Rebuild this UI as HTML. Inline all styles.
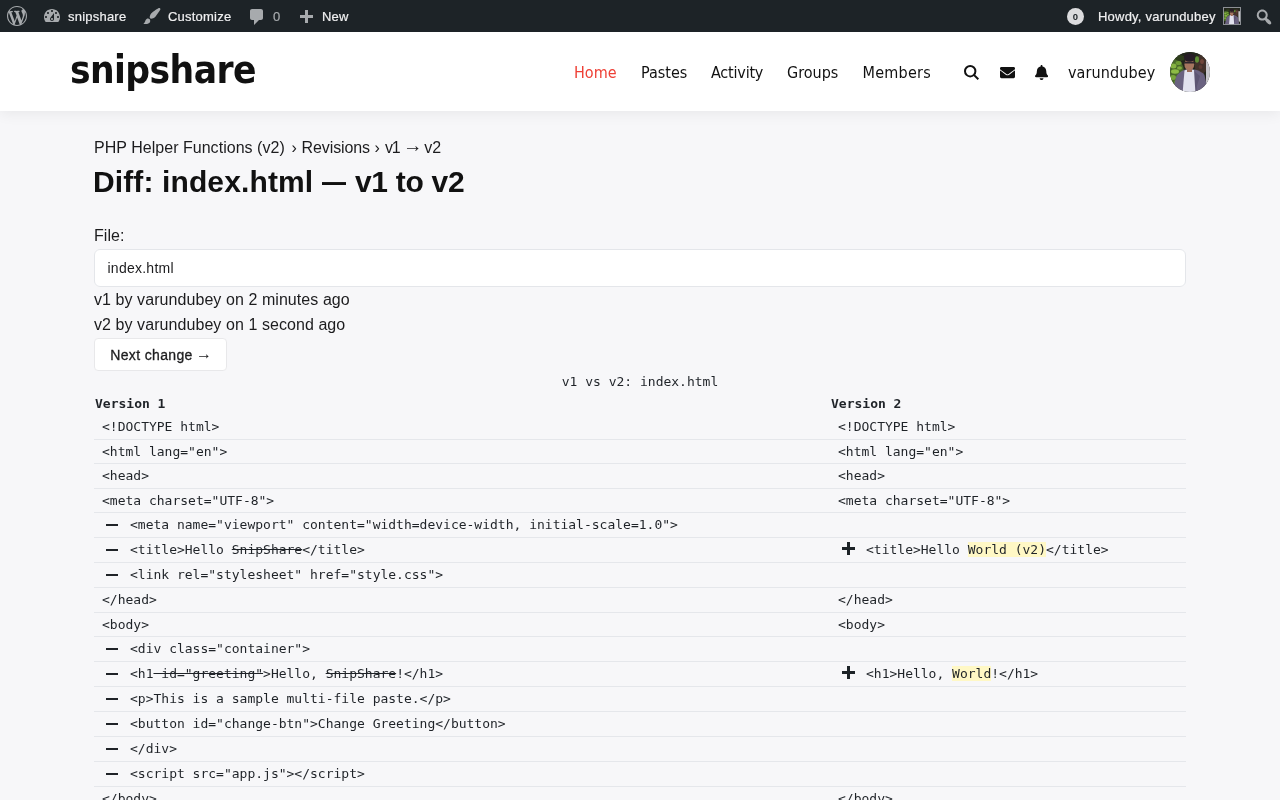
<!DOCTYPE html>
<html lang="en">
<head>
<meta charset="UTF-8">
<title>Diff: index.html — v1 to v2 – snipshare</title>
<style>
*{box-sizing:border-box;margin:0;padding:0}
html,body{width:1280px;height:800px;overflow:hidden}
body{background:#f7f7f9;font-family:"Liberation Sans",sans-serif;color:#1c1c1e;position:relative}
a{color:inherit;text-decoration:none}
/* admin bar */
.bar-bg{position:absolute;left:0;top:0;width:1280px;height:32px;background:#1d2327}
#wpadminbar{position:absolute;left:0;top:0;width:1280px;height:32px;color:#f0f0f1;font-size:13px;line-height:32px;will-change:transform}
#wpadminbar .ab{position:absolute;top:1px;height:32px;white-space:nowrap;letter-spacing:.22px;-webkit-text-stroke:.2px currentColor}
#wpadminbar svg{position:absolute;fill:#a7aaad}
/* header */
.head-bg{position:absolute;left:0;top:32px;width:1280px;height:79px;background:#fff;box-shadow:0 2px 14px rgba(0,0,0,.07)}
#masthead{position:absolute;left:0;top:32px;width:1280px;height:79px;will-change:transform}
.site-title{position:absolute;left:70px;top:12px;font-family:"DejaVu Sans Condensed","DejaVu Sans","Liberation Sans",sans-serif;font-stretch:condensed;font-weight:bold;font-size:38.5px;line-height:52px;color:#111;letter-spacing:-0.6px;white-space:nowrap}
.nav a{position:absolute;top:29px;font-family:"DejaVu Sans Condensed","DejaVu Sans","Liberation Sans",sans-serif;font-stretch:condensed;font-size:16px;line-height:24px;color:#111;white-space:nowrap}
.nav a.cur{color:#ee4036}
#masthead svg{position:absolute;fill:#111}
.avatar{position:absolute;left:1170px;top:20px;width:40px;height:40px;border-radius:50%;overflow:hidden}
/* content */
#content{position:absolute;left:94px;top:111px;width:1092px;will-change:transform}
.abs{position:absolute;white-space:nowrap}

.crumb{font-size:16px;line-height:20px;color:#1c1c1e}
.crumb .s1{letter-spacing:.03px}
.crumb .s2{letter-spacing:-.1px}
.crumb .sep1{margin:0 .4px 0 2.2px}
.crumb .sep2{margin:0 .7px 0 0}
.crumb .v1{letter-spacing:-1.2px}
.arr{display:inline-block;font-size:19.5px;line-height:0;position:relative;top:-1.3px;margin:0 -2.5px 0 -1px}
h1{font-size:30px;line-height:40px;font-weight:bold;color:#111;letter-spacing:0}
label,#content p{font-size:16px;line-height:20px;color:#1c1c1e;letter-spacing:.07px}
.select{width:1092px;height:38px;border:1px solid #e4e6ea;border-radius:6px;background:#fff;font-size:14px;line-height:37px;padding-left:12.500px;color:#1c1c1e;letter-spacing:.25px}
.btn{width:133px;height:33px;border:1px solid #e8e8ea;border-radius:4px;background:#fff;font-size:14px;line-height:33px;text-align:center;color:#1c1c1e;letter-spacing:.35px;-webkit-text-stroke:.3px currentColor}
table.diff{position:absolute;left:0;top:259px;width:1092px;border-collapse:separate;border-spacing:0;table-layout:fixed;font-family:"DejaVu Sans Mono","Liberation Mono",monospace;font-size:13px;color:#1f2328}
table.diff caption{height:20px;line-height:20px;position:relative;top:2px;text-align:center;white-space:nowrap}
table.diff th{height:25px;line-height:25px;position:relative;top:1px;text-align:left;font-weight:bold;padding:0 0 0 1px;white-space:nowrap}
table.diff td{height:24.5px;line-height:23.5px;padding:0 8px;border-bottom:1px solid #e5e7eb;white-space:nowrap;position:relative;vertical-align:top}
table.diff tr.chg td{height:25px;line-height:23px}
table.diff td.ch{padding-left:36px}
table.diff i{position:absolute;left:8px;top:2px;width:20px;height:20px}
table.diff i.mi:before{content:"";position:absolute;left:4px;top:9px;width:12px;height:2px;background:#1f2328}
table.diff i.pl:before{content:"";position:absolute;left:4px;top:7px;width:13px;height:3px;background:#1d2327}
table.diff i.pl:after{content:"";position:absolute;left:9px;top:2px;width:3px;height:13px;background:#1d2327}
.arr2{display:inline-block;font-size:16px;line-height:0;position:relative;top:-.8px;margin:0 -1.5px 0 -1px;-webkit-text-stroke:0}
del{text-decoration:line-through}
h1 .dash{display:inline-block;transform:scaleX(.8);transform-origin:0 50%;margin-right:-5px}
h1 .last{letter-spacing:-.3px}
h1 .first{letter-spacing:.12px}
ins{text-decoration:none;background:#fff8c5}
</style>
</head>
<body>
<svg width="0" height="0" style="position:absolute"><defs>
<filter id="bl" x="-10%" y="-10%" width="120%" height="120%"><feGaussianBlur stdDeviation="0.6"/></filter>
<symbol id="av" viewBox="0 0 40 40">
<rect width="40" height="40" fill="#23281b"/>
<g filter="url(#bl)">
<rect x="-2" y="-2" width="44" height="44" fill="#23281b"/>
<ellipse cx="5" cy="20" rx="9" ry="13" fill="#48682a"/>
<ellipse cx="3.500" cy="14" rx="3" ry="2.500" fill="#86b342"/>
<ellipse cx="8.500" cy="11" rx="3" ry="2" fill="#6f9c36"/>
<ellipse cx="5" cy="19.500" rx="4" ry="2.200" fill="#8dbb45"/>
<ellipse cx="9.500" cy="16" rx="2.500" ry="1.800" fill="#7eaa3c"/>
<ellipse cx="3" cy="25.500" rx="3" ry="2.500" fill="#78a53a"/>
<ellipse cx="7" cy="30" rx="3" ry="2" fill="#5f8a30"/>
<ellipse cx="10" cy="6" rx="5" ry="3" fill="#2e3d1d"/>
<ellipse cx="31" cy="12.500" rx="6.500" ry="9.500" fill="#43302a"/>
<ellipse cx="27" cy="7.500" rx="2" ry="3.200" fill="#5f8f35"/>
<ellipse cx="32" cy="9.500" rx="2" ry="2.500" fill="#70463b"/>
<ellipse cx="30.500" cy="15" rx="2" ry="2" fill="#5a3a30"/>
<rect x="36" y="8" width="6" height="26" fill="#c8c8cc"/>
<path d="M2 42 L6 25 Q8 20.500 15 17.500 L25 17.500 Q32 19.500 34.500 23 L38.500 42z" fill="#6b6280"/>
<path d="M24 19 L30 24 L27 34 L26 42 L22 42z" fill="#5d5572"/>
<path d="M14.500 18.500 L17 17.500 L22 17.500 L24 18 L25.500 42 L12.500 42z" fill="#e2e2ee"/>
<rect x="17" y="15" width="5" height="5" fill="#9a6a58"/>
<ellipse cx="19.300" cy="12.600" rx="4.900" ry="6" fill="#a5745f"/>
<ellipse cx="19.500" cy="5.500" rx="5.600" ry="4.300" fill="#271e25"/>
<rect x="14.200" y="9.800" width="10.400" height="1.700" rx=".5" fill="#2d262d"/>
</g>
</symbol></defs></svg>
<div class="head-bg"></div>
<div class="bar-bg"></div>
<div id="wpadminbar">
  <svg style="left:7px;top:6px" width="20" height="20" viewBox="0 0 20 20"><path d="M20 10c0-5.510-4.490-10-10-10C4.480 0 0 4.490 0 10c0 5.520 4.480 10 10 10 5.510 0 10-4.480 10-10zM7.780 15.370L4.370 6.220c.55-.02 1.170-.08 1.170-.08.5-.06.44-1.130-.06-1.110 0 0-1.450.11-2.370.11-.18 0-.37 0-.58-.01C4.120 2.690 6.870 1.110 10 1.110c2.330 0 4.450.87 6.050 2.340-.68-.11-1.650.39-1.650 1.580 0 .74.45 1.360.9 2.100.35.61.55 1.360.55 2.460 0 1.490-1.400 5-1.400 5l-3.030-8.370c.54-.02.82-.17.82-.17.5-.05.44-1.250-.06-1.220 0 0-1.440.12-2.380.12-.87 0-2.330-.12-2.330-.12-.5-.03-.56 1.200-.06 1.220l.92.080 1.260 3.410zM17.410 10c.24-.64.74-1.870.43-4.250.7 1.290 1.050 2.710 1.050 4.250 0 3.290-1.730 6.240-4.400 7.780.97-2.590 1.940-5.200 2.920-7.780zM6.100 18.090C3.120 16.650 1.110 13.530 1.110 10c0-1.300.23-2.480.72-3.590C3.250 10.300 4.670 14.200 6.100 18.090zm4.030-6.630l2.580 6.980c-.86.29-1.760.45-2.710.45-.79 0-1.570-.11-2.290-.33.810-2.380 1.620-4.740 2.420-7.100z"/></svg>
  <svg style="left:42px;top:6px" width="20" height="20" viewBox="0 0 20 20"><path d="M3.760 16h12.480c1.100-1.370 1.760-3.110 1.760-5 0-4.420-3.580-8-8-8s-8 3.580-8 8c0 1.890.66 3.630 1.760 5zM10 4c.55 0 1 .45 1 1s-.45 1-1 1-1-.45-1-1 .45-1 1-1zM6 6c.55 0 1 .45 1 1s-.45 1-1 1-1-.45-1-1 .45-1 1-1zm8 0c.55 0 1 .45 1 1s-.45 1-1 1-1-.45-1-1 .45-1 1-1zm-5.370 5.550L12 7v6c0 1.100-.9 2-2 2s-2-.9-2-2c0-.57.24-1.080.63-1.450zM4 10c.55 0 1 .45 1 1s-.45 1-1 1-1-.45-1-1 .45-1 1-1zm12 0c.55 0 1 .45 1 1s-.45 1-1 1-1-.45-1-1 .45-1 1-1zm-5 3c0-.55-.45-1-1-1s-1 .45-1 1 .45 1 1 1 1-.45 1-1z"/></svg>
  <a class="ab" style="left:68px">snipshare</a>
  <svg style="left:142px;top:6px" width="20" height="20" viewBox="0 0 20 20"><path d="M18.330 3.570s.27-.8-.31-1.360c-.53-.52-1.220-.24-1.220-.24-.61.3-5.760 3.470-7.670 5.570-.86.96-2.060 3.790-1.090 4.820.92.980 3.960-.17 4.790-1 2.060-2.060 5.210-7.170 5.500-7.790zM1.400 17.650c2.370-1.560 1.460-3.410 3.230-4.640.93-.65 2.220-.62 3.080.29.630.67.800 2.570-.16 3.460-1.570 1.450-4 1.550-6.150.89z"/></svg>
  <a class="ab" style="left:168px">Customize</a>
  <svg style="left:246.6px;top:7px" width="20" height="20" viewBox="0 0 20 20"><path d="M5 2h9c1.100 0 2 .9 2 2v7c0 1.100-.9 2-2 2h-2l-5 5v-5H5c-1.100 0-2-.9-2-2V4c0-1.100.9-2 2-2z"/></svg>
  <a class="ab" style="left:273px;color:#a7aaad">0</a>
  <svg style="left:296px;top:8px" width="20" height="20" viewBox="0 0 20 20"><path d="M17 7v3h-5v5H9v-5H4V7h5V2h3v5h5z"/></svg>
  <a class="ab" style="left:322px">New</a>
  <span class="ab" style="left:1067px;top:8px;width:17px;height:17px;border-radius:50%;background:#dcdcde;color:#1d2327;font-size:9.5px;font-weight:bold;line-height:17px;text-align:center;letter-spacing:0;-webkit-text-stroke:0">0</span>
  <a class="ab" style="left:1098px">Howdy, varundubey</a>
  <span class="ab" style="left:1223px;top:7px;width:18px;height:18px;border:1px solid #8c8f94;overflow:hidden"><svg style="left:0;top:0;position:absolute" width="16" height="16" viewBox="0 0 40 40"><use href="#av"/></svg></span>
  <svg style="left:1254px;top:6.500px" width="20" height="20" viewBox="0 0 20 20"><path d="M12.140 4.180c1.870 1.870 2.110 4.750.72 6.890.12.100.22.210.36.310.2.160.47.360.81.590.34.240.56.390.66.470.42.310.73.570.94.780.32.320.6.650.84 1 .25.350.44.690.59 1.040.14.350.21.680.18 1-.02.320-.14.590-.36.810s-.49.340-.81.360c-.31.020-.65-.04-.99-.19-.35-.14-.7-.34-1.040-.59-.35-.24-.68-.52-1-.84-.21-.21-.47-.52-.77-.93-.1-.13-.25-.35-.47-.66-.22-.32-.4-.57-.56-.78-.16-.2-.29-.35-.44-.5-2.070 1.090-4.690.76-6.440-.98-2.140-2.150-2.140-5.640 0-7.790 2.150-2.150 5.630-2.150 7.780.01zm-1.410 6.360c1.360-1.370 1.360-3.580 0-4.950-1.370-1.370-3.590-1.370-4.950 0-1.370 1.370-1.370 3.580 0 4.950 1.360 1.370 3.580 1.370 4.950 0z"/></svg>
</div>

<div id="masthead">
  <a class="site-title">snipshare</a>
  <div class="nav">
    <a class="cur" style="left:574px">Home</a>
    <a style="left:641px">Pastes</a>
    <a style="left:711px;letter-spacing:-.2px">Activity</a>
    <a style="left:787px">Groups</a>
    <a style="left:862.5px;letter-spacing:.25px">Members</a>
    <a style="left:1068px;letter-spacing:.1px">varundubey</a>
  </div>
  <svg style="left:964px;top:32.8px" width="15" height="15" viewBox="0 0 15 15"><circle cx="6.2" cy="6.2" r="5.2" fill="none" stroke="#111" stroke-width="2"/><path d="M9.900 9.900L14.300 14.300" fill="none" stroke="#111" stroke-width="2"/></svg>
  <svg style="left:999.7px;top:32.8px" width="15" height="15" viewBox="0 0 512 512"><path d="M502.300 190.800c3.900-3.100 9.700-.2 9.700 4.700V400c0 26.500-21.500 48-48 48H48c-26.500 0-48-21.500-48-48V195.600c0-5 5.700-7.800 9.700-4.700 22.400 17.400 52.100 39.500 154.100 113.600 21.100 15.400 56.700 47.800 92.200 47.600 35.700.3 72-32.800 92.300-47.600 102-74.100 131.600-96.300 154-113.700zM256 320c23.200.4 56.600-29.200 73.400-41.400 132.700-96.300 142.800-104.700 173.400-128.700 5.800-4.500 9.200-11.500 9.200-18.900v-19c0-26.500-21.500-48-48-48H48C21.500 64 0 85.500 0 112v19c0 7.400 3.400 14.300 9.200 18.900 30.600 23.900 40.700 32.400 173.400 128.700 16.800 12.200 50.200 41.800 73.400 41.400z"/></svg>
  <svg style="left:1035px;top:32.8px" width="13.125" height="15" viewBox="0 0 448 512"><path d="M224 512c35.320 0 63.970-28.650 63.970-64H160.030c0 35.350 28.650 64 63.970 64zm215.390-149.710c-19.320-20.760-55.470-51.990-55.470-154.290 0-77.700-54.480-139.900-127.940-155.160V32c0-17.670-14.320-32-31.980-32s-31.980 14.330-31.980 32v20.840C118.560 68.100 64.080 130.300 64.080 208c0 102.300-36.150 133.530-55.470 154.290-6 6.450-8.660 14.160-8.610 21.710.11 16.400 12.980 32 32.100 32h383.800c19.120 0 32-15.600 32.100-32 .05-7.550-2.610-15.270-8.610-21.710z"/></svg>
  <div class="avatar"><svg style="left:0;top:0" width="40" height="40" viewBox="0 0 40 40"><use href="#av"/></svg></div>
</div>

<div id="content">
  <div class="abs crumb" style="left:0;top:27px"><a class="s1">PHP Helper Functions (v2)</a> <span class="sep1">›</span> <a class="s2">Revisions</a> <span class="sep2">›</span> <span><span class="v1">v1</span> <span class="arr">→</span> v2</span></div>
  <h1 class="abs" style="left:-1px;top:51px"><span class="first">Diff: index.html</span> <span class="dash">—</span> <span class="last">v1 to v2</span></h1>
  <label class="abs" style="left:0;top:115px">File:</label>
  <div class="abs select" style="left:0;top:138px">index.html</div>
  <p class="abs" style="left:0;top:179px">v1 by varundubey on 2 minutes ago</p>
  <p class="abs" style="left:0;top:204px">v2 by varundubey on 1 second ago</p>
  <a class="abs btn" style="left:0;top:227px">Next change <span class="arr2">→</span></a>
  <table class="diff">
    <caption>v1 vs v2: index.html</caption>
    <colgroup><col style="width:720px"><col style="width:16px"><col style="width:356px"></colgroup>
    <thead><tr><th>Version 1</th><th></th><th>Version 2</th></tr></thead>
    <tbody>
<tr><td class="l">&lt;!DOCTYPE html&gt;</td><td class="m"></td><td class="r">&lt;!DOCTYPE html&gt;</td></tr>
<tr><td class="l">&lt;html lang="en"&gt;</td><td class="m"></td><td class="r">&lt;html lang="en"&gt;</td></tr>
<tr><td class="l">&lt;head&gt;</td><td class="m"></td><td class="r">&lt;head&gt;</td></tr>
<tr><td class="l">&lt;meta charset="UTF-8"&gt;</td><td class="m"></td><td class="r">&lt;meta charset="UTF-8"&gt;</td></tr>
<tr class="chg"><td class="l ch"><i class="mi"></i>&lt;meta name="viewport" content="width=device-width, initial-scale=1.0"&gt;</td><td class="m"></td><td class="r"></td></tr>
<tr class="chg"><td class="l ch"><i class="mi"></i>&lt;title&gt;Hello <del>SnipShare</del>&lt;/title&gt;</td><td class="m"></td><td class="r ch"><i class="pl"></i>&lt;title&gt;Hello <ins>World (v2)</ins>&lt;/title&gt;</td></tr>
<tr class="chg"><td class="l ch"><i class="mi"></i>&lt;link rel="stylesheet" href="style.css"&gt;</td><td class="m"></td><td class="r"></td></tr>
<tr><td class="l">&lt;/head&gt;</td><td class="m"></td><td class="r">&lt;/head&gt;</td></tr>
<tr><td class="l">&lt;body&gt;</td><td class="m"></td><td class="r">&lt;body&gt;</td></tr>
<tr class="chg"><td class="l ch"><i class="mi"></i>&lt;div class="container"&gt;</td><td class="m"></td><td class="r"></td></tr>
<tr class="chg"><td class="l ch"><i class="mi"></i>&lt;h1<del> id="greeting"</del>&gt;Hello, <del>SnipShare</del>!&lt;/h1&gt;</td><td class="m"></td><td class="r ch"><i class="pl"></i>&lt;h1&gt;Hello, <ins>World</ins>!&lt;/h1&gt;</td></tr>
<tr class="chg"><td class="l ch"><i class="mi"></i>&lt;p&gt;This is a sample multi-file paste.&lt;/p&gt;</td><td class="m"></td><td class="r"></td></tr>
<tr class="chg"><td class="l ch"><i class="mi"></i>&lt;button id="change-btn"&gt;Change Greeting&lt;/button&gt;</td><td class="m"></td><td class="r"></td></tr>
<tr class="chg"><td class="l ch"><i class="mi"></i>&lt;/div&gt;</td><td class="m"></td><td class="r"></td></tr>
<tr class="chg"><td class="l ch"><i class="mi"></i>&lt;script src="app.js"&gt;&lt;/script&gt;</td><td class="m"></td><td class="r"></td></tr>
<tr><td class="l">&lt;/body&gt;</td><td class="m"></td><td class="r">&lt;/body&gt;</td></tr>
    </tbody>
  </table>
</div>
</body>
</html>
